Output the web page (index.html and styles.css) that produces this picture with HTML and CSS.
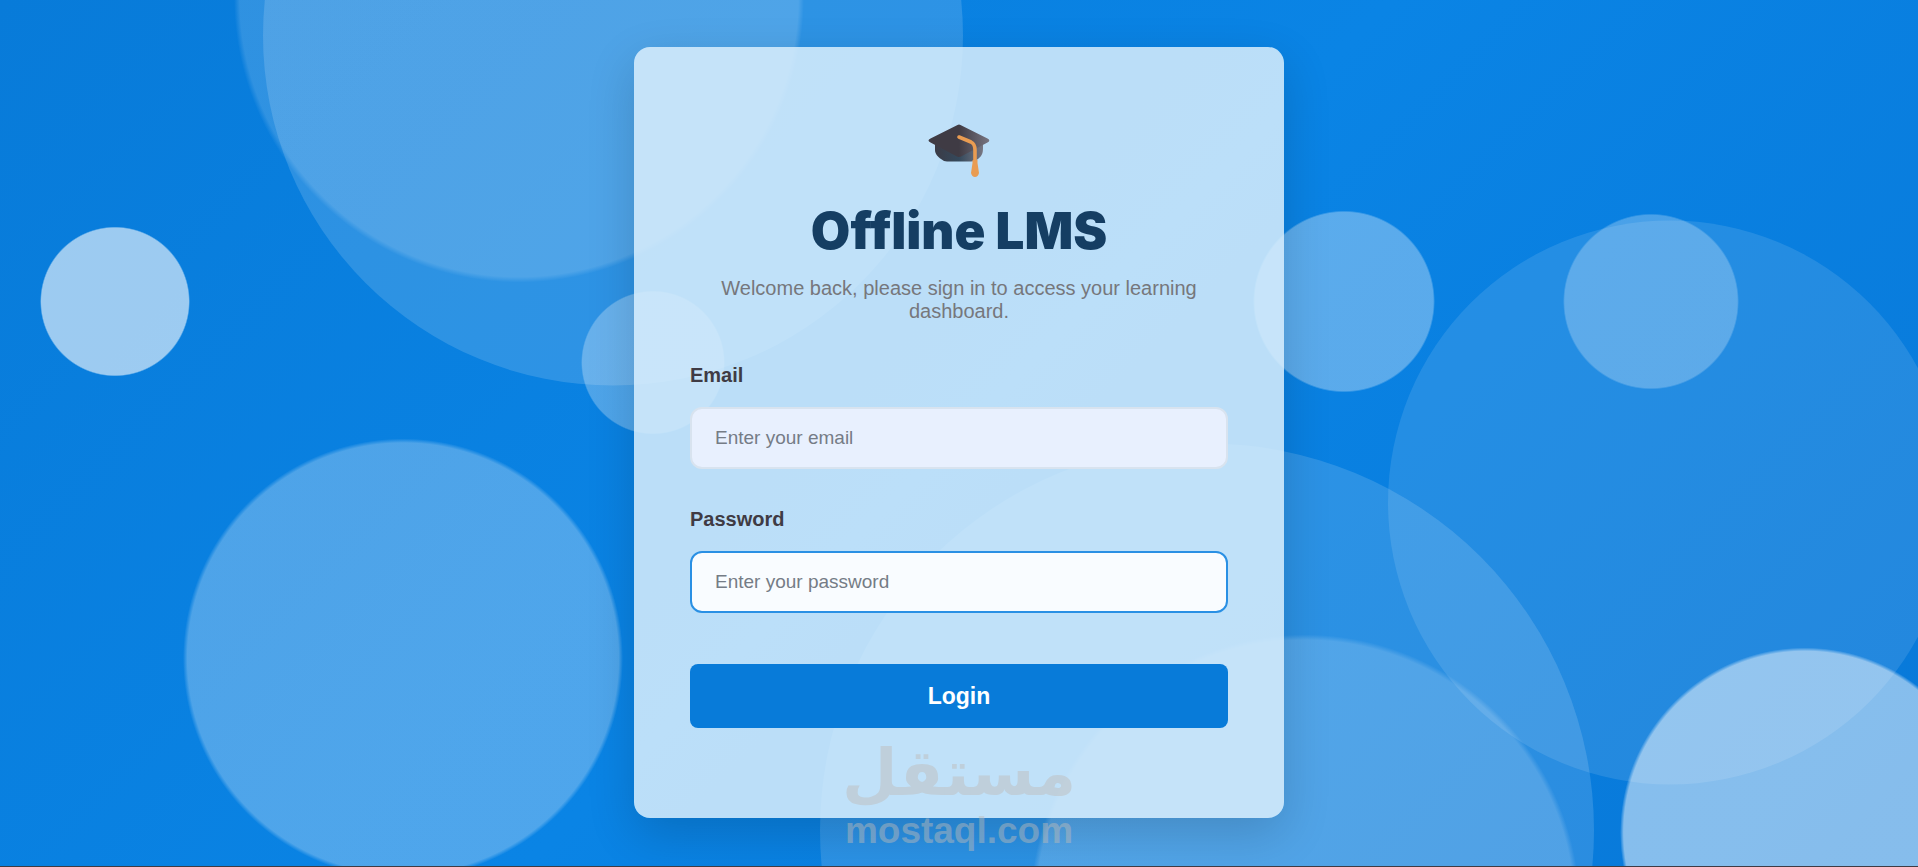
FILE: index.html
```
<!DOCTYPE html>
<html lang="en">
<head>
    <meta charset="UTF-8">
    <meta name="viewport" content="width=device-width, initial-scale=1.0">
    <title>Login | Offline LMS</title>
    <link rel="stylesheet" href="styles.css">
</head>
<body>
    <svg class="bubbles" viewBox="0 0 1918 867" preserveAspectRatio="xMidYMid slice" aria-hidden="true">
        <defs>
            <radialGradient id="soft">
                <stop offset="0.98" stop-color="#fff"/>
                <stop offset="1" stop-color="#fff" stop-opacity="0"/>
            </radialGradient>
        </defs>
        <g fill="#fff">
            <circle cx="613" cy="36" r="350" opacity="0.15"/>
            <circle cx="1207" cy="831" r="387" opacity="0.14"/>
            <circle cx="1670" cy="503" r="282" opacity="0.11"/>
        </g>
        <g fill="url(#soft)">
            <circle cx="519" cy="-2" r="285" opacity="0.16"/>
            <circle cx="403" cy="659" r="220" opacity="0.28"/>
            <circle cx="115" cy="302" r="75" opacity="0.6"/>
            <circle cx="653" cy="363" r="72" opacity="0.28"/>
            <circle cx="1344" cy="302" r="91" opacity="0.33"/>
            <circle cx="1651" cy="302" r="88" opacity="0.26"/>
            <circle cx="1305" cy="910" r="275" opacity="0.18"/>
            <circle cx="1805" cy="833" r="185" opacity="0.51"/>
        </g>
    </svg>

    <main class="login-card">
        <svg class="logo" viewBox="0 0 64 64" aria-hidden="true">
            <defs>
                <linearGradient id="board" x1="0" y1="0" x2="1" y2="0">
                    <stop offset="0.5" stop-color="#3f3b44"/>
                    <stop offset="1" stop-color="#777480"/>
                </linearGradient>
                <linearGradient id="cap" x1="0" y1="0" x2="1" y2="0">
                    <stop offset="0" stop-color="#3b3b46"/>
                    <stop offset="0.5" stop-color="#34495c"/>
                    <stop offset="1" stop-color="#777682"/>
                </linearGradient>
            </defs>
            <path d="M8 24v7c0 4 3 7 6 9q3 2.500 6 2.500h24q4 0 7-2.500c4-3 5-6 5-11v-5z" fill="url(#cap)"/>
            <path d="M30.500 6q1.500-1 3 0l27 13.500q2 1 1.800 2.200T60.500 23.500L35 37q-3 2-6 0L3.500 23.500Q1.500 22.500 1.500 21.500t2-2z" fill="url(#board)"/>
            <path d="M32 18l12 5q4 2 4 8v16" fill="none" stroke="#e99c52" stroke-width="3.600" stroke-linecap="round"/>
            <path d="M45.500 41h5v3l1.500 10q-1 4-4 4t-4-4l1.500-10z" fill="#e99c52"/>
        </svg>
        <h1>Offline LMS</h1>
        <p class="subtitle">Welcome back, please sign in to access your learning dashboard.</p>

        <form class="login-form">
            <div class="form-group">
                <label for="email">Email</label>
                <input type="email" id="email" class="filled" name="email" placeholder="Enter your email">
            </div>
            <div class="form-group">
                <label for="password">Password</label>
                <input type="password" id="password" name="password" placeholder="Enter your password" autofocus>
            </div>
            <button type="submit">Login</button>
        </form>
    </main>

    <div class="watermark">
        <span class="watermark-ar" lang="ar" dir="rtl">مستقل</span>
        <span class="watermark-en">mostaql.com</span>
    </div>
</body>
</html>
```

FILE: styles.css
```
* {
    box-sizing: border-box;
}
body {
    margin: 0;
    min-height: 100vh;
    padding-bottom: 1px;
    display: flex;
    align-items: center;
    justify-content: center;
    position: relative;
    overflow: hidden;
    font-family: "Liberation Sans", Arial, sans-serif;
    background: linear-gradient(135deg, #087bd9 0%, #0a84e5 50%, #0878d8 100%);
    border-bottom: 1px solid #3f3b44;
}
.bubbles {
    position: absolute;
    top: 0;
    left: 0;
    width: 100%;
    height: 100%;
}
.login-card {
    position: relative;
    width: 100%;
    max-width: 650px;
    padding: 72px 56px 90px;
    background-color: rgba(217, 237, 251, 0.86);
    border-radius: 16px;
    box-shadow: 0 16px 48px rgba(0, 0, 0, 0.16);
    text-align: center;
}
.logo {
    display: block;
    width: 64px;
    height: 64px;
    margin: 0 auto 20px;
}
h1 {
    margin: 0 0 18px;
    font-family: Inter, "Arial Black", sans-serif;
    font-size: 51px;
    font-weight: 900;
    line-height: 56px;
    color: #153e63;
}
.subtitle {
    margin: 0 0 40px;
    font-size: 20px;
    line-height: 23px;
    color: #76777c;
}
.login-form {
    text-align: left;
}
.form-group {
    display: flex;
    flex-direction: column;
    gap: 20px;
    margin-bottom: 38px;
}
.form-group label {
    font-size: 20px;
    font-weight: 700;
    line-height: 24px;
    color: #3f3b44;
}
.form-group input {
    width: 100%;
    height: 62px;
    padding: 0 23px;
    font-family: inherit;
    font-size: 19px;
    color: #3f3b44;
    background-color: #f9fcff;
    border: 2px solid #d8e3ef;
    border-radius: 12px;
}
.form-group input.filled {
    background-color: #e8f0fe;
}
.form-group input::placeholder {
    color: #757c86;
}
.form-group input:focus {
    outline: none;
    border-color: #2a90e4;
}
.login-form button {
    width: 100%;
    height: 64px;
    margin-top: 13px;
    font-family: inherit;
    font-size: 23px;
    font-weight: 700;
    color: #fff;
    background-color: #087bd9;
    border: none;
    border-radius: 8px;
    cursor: pointer;
}
.login-form button:hover {
    background-color: #066bbf;
}
.watermark {
    position: absolute;
    left: 0;
    right: 0;
    bottom: 15px;
    display: flex;
    flex-direction: column;
    align-items: center;
    font-weight: 700;
    color: #bebbb8;
    opacity: 0.46;
    pointer-events: none;
}
.watermark-ar {
    font-family: "DejaVu Sans", sans-serif;
    font-size: 64px;
    line-height: 76px;
}
.watermark-en {
    font-size: 37px;
    line-height: 40px;
}
```
